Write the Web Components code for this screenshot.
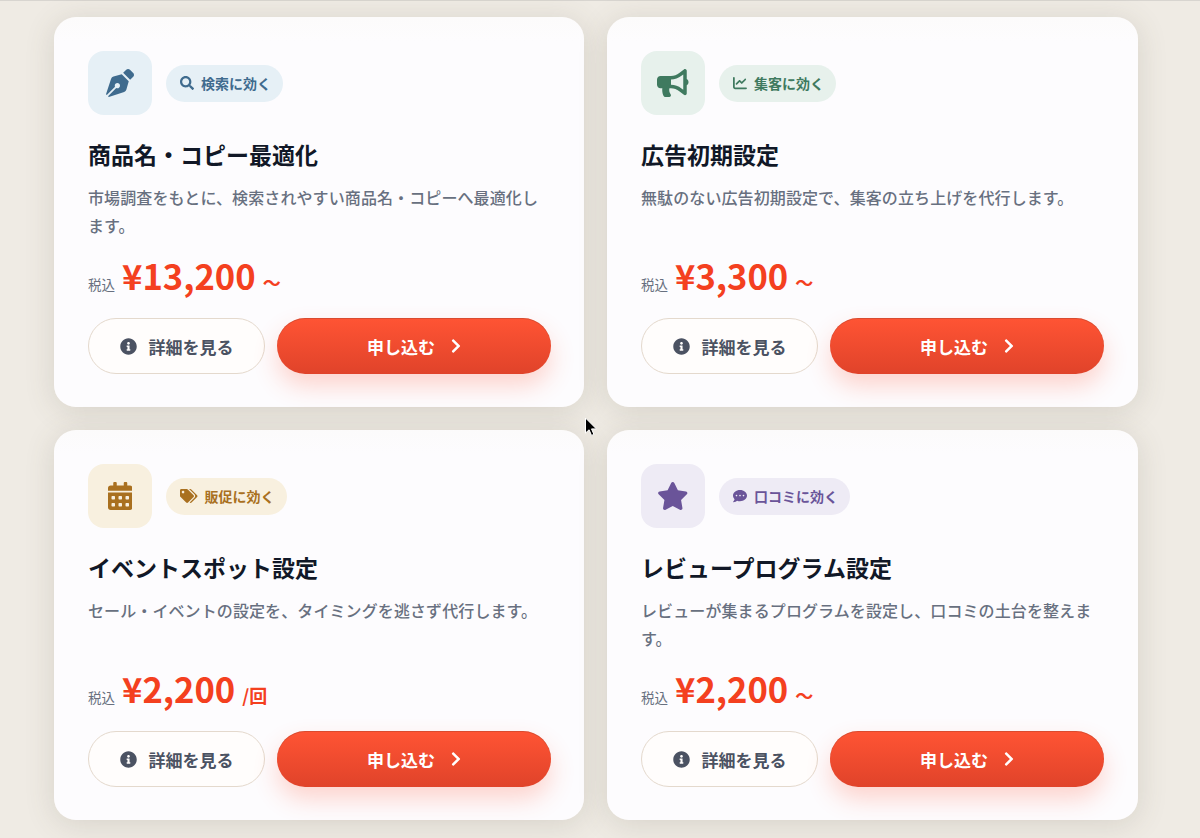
<!DOCTYPE html>
<html lang="ja">
<head>
<meta charset="utf-8">
<title>services</title>
<style>
  html, body { margin: 0; height: 838px; overflow: hidden; }
  body {
    background: linear-gradient(#d8d5d0 1px, transparent 1px), #efebe4;
    font-family: "Noto Sans CJK JP", "Noto Sans", sans-serif;
  }
</style>
</head>
<body>
<service-grid>
  <service-card tone="blue" tag="検索に効く" icon="pen" tagicon="search" price="¥13,200" unit="〜" heading="商品名・コピー最適化">市場調査をもとに、検索されやすい商品名・コピーへ最適化します。</service-card>
  <service-card tone="green" tag="集客に効く" icon="bullhorn" tagicon="chart" price="¥3,300" unit="〜" heading="広告初期設定">無駄のない広告初期設定で、集客の立ち上げを代行します。</service-card>
  <service-card tone="amber" tag="販促に効く" icon="calendar" tagicon="tags" price="¥2,200" unit="/回" heading="イベントスポット設定">セール・イベントの設定を、タイミングを逃さず代行します。</service-card>
  <service-card tone="purple" tag="口コミに効く" icon="star" tagicon="comment" price="¥2,200" unit="〜" heading="レビュープログラム設定">レビューが集まるプログラムを設定し、口コミの土台を整えます。</service-card>
</service-grid>
<mouse-cursor></mouse-cursor>

<script>
const ICONS = {
  search: ['0 0 512 512', 'M505 442.7L405.3 343c-4.5-4.5-10.6-7-17-7H372c27.6-35.3 44-79.7 44-128C416 93.1 322.9 0 208 0S0 93.1 0 208s93.1 208 208 208c48.3 0 92.7-16.4 128-44v16.3c0 6.4 2.5 12.5 7 17l99.7 99.7c9.4 9.4 24.6 9.4 33.9 0l28.3-28.3c9.4-9.4 9.4-24.6.1-34zM208 336c-70.7 0-128-57.2-128-128 0-70.7 57.2-128 128-128 70.7 0 128 57.2 128 128 0 70.7-57.2 128-128 128z'],
  info: ['0 0 512 512', 'M256 8C119.043 8 8 119.083 8 256c0 136.997 111.043 248 248 248s248-111.003 248-248C504 119.083 392.957 8 256 8zm0 110c23.196 0 42 18.804 42 42s-18.804 42-42 42-42-18.804-42-42 18.804-42 42-42zm56 254c0 6.627-5.373 12-12 12h-88c-6.627 0-12-5.373-12-12v-24c0-6.627 5.373-12 12-12h12v-64h-12c-6.627 0-12-5.373-12-12v-24c0-6.627 5.373-12 12-12h64c6.627 0 12 5.373 12 12v100h12c6.627 0 12 5.373 12 12v24z'],
  chevron: ['0 0 320 512', 'M285.476 272.971L91.132 467.314c-9.373 9.373-24.569 9.373-33.941 0l-22.667-22.667c-9.357-9.357-9.375-24.522-.04-33.901L188.505 256 34.484 101.255c-9.335-9.379-9.317-24.544.04-33.901l22.667-22.667c9.373-9.373 24.569-9.373 33.941 0L285.475 239.03c9.373 9.372 9.373 24.568.001 33.941z'],
  star: ['0 0 576 512', 'M259.3 17.8L194 150.2 47.9 171.5c-26.2 3.8-36.7 36.1-17.7 54.6l105.7 103-25 145.5c-4.5 26.3 23.2 46 46.4 33.7L288 439.6l130.7 68.7c23.2 12.2 50.9-7.4 46.4-33.7l-25-145.5 105.7-103c19-18.5 8.5-50.8-17.7-54.6L382 150.2 316.7 17.8c-11.7-23.6-45.6-23.9-57.4 0z'],
  calendar: ['0 0 448 512', 'M0 464c0 26.5 21.5 48 48 48h352c26.5 0 48-21.5 48-48V192H0v272zm320-196c0-6.6 5.4-12 12-12h40c6.6 0 12 5.4 12 12v40c0 6.6-5.4 12-12 12h-40c-6.6 0-12-5.4-12-12v-40zm0 128c0-6.6 5.4-12 12-12h40c6.6 0 12 5.4 12 12v40c0 6.6-5.4 12-12 12h-40c-6.6 0-12-5.4-12-12v-40zM192 268c0-6.6 5.4-12 12-12h40c6.6 0 12 5.4 12 12v40c0 6.6-5.4 12-12 12h-40c-6.6 0-12-5.4-12-12v-40zm0 128c0-6.6 5.4-12 12-12h40c6.6 0 12 5.4 12 12v40c0 6.6-5.4 12-12 12h-40c-6.6 0-12-5.4-12-12v-40zM64 268c0-6.6 5.4-12 12-12h40c6.6 0 12 5.4 12 12v40c0 6.6-5.4 12-12 12H76c-6.6 0-12-5.4-12-12v-40zm0 128c0-6.6 5.4-12 12-12h40c6.6 0 12 5.4 12 12v40c0 6.6-5.4 12-12 12H76c-6.6 0-12-5.4-12-12v-40zM400 64h-48V16c0-8.8-7.2-16-16-16h-32c-8.8 0-16 7.2-16 16v48H160V16c0-8.8-7.2-16-16-16h-32c-8.8 0-16 7.2-16 16v48H48C21.5 64 0 85.5 0 112v48h448v-48c0-26.5-21.5-48-48-48z'],
  pen: ['0 0 512 512', 'M136.6 138.79a64.003 64.003 0 0 0-43.31 41.35L0 460l14.69 14.69L164.8 324.58c-2.99-6.26-4.8-13.18-4.8-20.58 0-26.51 21.49-48 48-48s48 21.49 48 48-21.49 48-48 48c-7.4 0-14.32-1.81-20.58-4.8L37.31 497.31 52 512l279.86-93.29a64.003 64.003 0 0 0 41.35-43.31L416 224 288 96l-151.4 42.79zm361.34-64.62l-60.11-60.11c-18.75-18.75-49.16-18.75-67.91 0l-56.55 56.55 128.02 128.02 56.55-56.55c18.75-18.75 18.75-49.15 0-67.91z'],
  bullhorn: ['0 0 576 512', 'M576 240c0-23.63-12.95-44.04-32-55.12V32.01C544 23.26 537.02 0 512 0c-7.12 0-14.19 2.38-19.98 7.02l-85.03 68.03C364.28 109.19 310.66 128 256 128H64c-35.35 0-64 28.65-64 64v96c0 35.35 28.65 64 64 64h33.7c-1.39 10.48-2.18 21.14-2.18 32 0 39.77 9.26 77.35 25.56 110.94 5.19 10.69 16.52 17.06 28.4 17.06h74.28c26.05 0 41.69-29.84 25.9-50.56-16.4-21.52-26.15-48.36-26.15-77.44 0-11.11 1.62-21.79 4.41-32H256c54.66 0 108.28 18.81 150.98 52.95l85.03 68.03a32.023 32.023 0 0 0 19.98 7.02c24.92 0 32-22.72 32-32V295.13C563.05 284.04 576 263.63 576 240zm-96 141.42l-33.05-26.44C392.95 311.78 325.12 288 256 288v-96c69.12 0 136.95-23.78 190.95-66.98L480 98.58v282.84z'],
  chart: ['0 0 512 512', 'M64 64c0-17.7-14.3-32-32-32S0 46.3 0 64V400c0 44.2 35.8 80 80 80H480c17.7 0 32-14.3 32-32s-14.3-32-32-32H80c-8.8 0-16-7.2-16-16V64zm406.6 86.6c12.5-12.5 12.5-32.8 0-45.3s-32.8-12.5-45.3 0L320 210.7l-57.4-57.4c-12.5-12.5-32.8-12.5-45.3 0l-112 112c-12.5 12.5-12.5 32.8 0 45.3s32.8 12.5 45.3 0L240 221.3l57.4 57.4c12.5 12.5 32.8 12.5 45.3 0l128-128z'],
  tags: ['0 0 640 512', 'M497.941 225.941L286.059 14.059A48 48 0 0 0 252.118 0H48C21.49 0 0 21.49 0 48v204.118a48 48 0 0 0 14.059 33.941l211.882 211.882c18.744 18.745 49.136 18.746 67.882 0l204.118-204.118c18.745-18.745 18.745-49.137 0-67.882zM112 160c-26.51 0-48-21.49-48-48s21.49-48 48-48 48 21.49 48 48-21.49 48-48 48zm513.941 133.823L421.823 497.941c-18.745 18.745-49.137 18.745-67.882 0l-.36-.36L527.64 323.522c16.999-16.999 26.36-39.6 26.36-63.64s-9.362-46.641-26.36-63.64L331.397 0h48.721a48 48 0 0 1 33.941 14.059l211.882 211.882c18.745 18.745 18.745 49.137 0 67.882z'],
  comment: ['0 0 512 512', 'M256 32C114.6 32 0 125.1 0 240c0 49.6 21.4 95 57 130.7C44.5 421.1 2.7 466 2.2 466.5c-2.2 2.3-2.8 5.7-1.5 8.7S4.8 480 8 480c66.3 0 116-31.8 140.6-51.4 32.7 12.3 69 19.4 107.4 19.4 141.4 0 256-93.1 256-208S397.4 32 256 32zM128 272c-17.7 0-32-14.3-32-32s14.3-32 32-32 32 14.3 32 32-14.3 32-32 32zm128 0c-17.7 0-32-14.3-32-32s14.3-32 32-32 32 14.3 32 32-14.3 32-32 32zm128 0c-17.7 0-32-14.3-32-32s14.3-32 32-32 32 14.3 32 32-14.3 32-32 32z']
};

const svgIcon = (name, size) => {
  const [box, d] = ICONS[name];
  return `<svg viewBox="${box}" height="${size}" fill="currentColor" aria-hidden="true"><path d="${d}"/></svg>`;
};

const TONES = {
  blue: { bg: '#e6f0f6', fg: '#3f6b8e' },
  green: { bg: '#e7f1ec', fg: '#3f7a5f' },
  amber: { bg: '#f8f0df', fg: '#a9701f' },
  purple: { bg: '#eeebf5', fg: '#6a5499' }
};

class ServiceGrid extends HTMLElement {
  constructor() {
    super();
    const shadow = this.attachShadow({ mode: 'open' });
    shadow.innerHTML = `
      <style>
        :host {
          display: grid;
          grid-template-columns: 530px 530.5px;
          grid-auto-rows: 390px;
          column-gap: 23px;
          row-gap: 23px;
          padding: 17px 0 0 54px;
        }
      </style>
      <slot></slot>
    `;
  }
}

class ServiceCard extends HTMLElement {
  connectedCallback() {
    if (this.shadowRoot) return;
    const tone = TONES[this.getAttribute('tone')];
    const shadow = this.attachShadow({ mode: 'open' });
    shadow.innerHTML = `
      <style>
        :host {
          display: flex;
          flex-direction: column;
          box-sizing: border-box;
          padding: 34px 33px 33px 34px;
          background: linear-gradient(#fcfbfb, #fdfcfe 24px);
          border-radius: 22px;
          box-shadow: 0 4px 30px rgba(90, 80, 60, 0.16);
          --tone-bg: ${tone.bg};
          --tone-fg: ${tone.fg};
        }
        .head { display: flex; align-items: center; gap: 14px; }
        .icon {
          width: 64px;
          height: 64px;
          border-radius: 16px;
          background: var(--tone-bg);
          color: var(--tone-fg);
          display: flex;
          align-items: center;
          justify-content: center;
        }
        .tag {
          display: flex;
          align-items: center;
          gap: 7px;
          height: 37px;
          padding: 0 12px 0 14px;
          border-radius: 19px;
          background: var(--tone-bg);
          color: var(--tone-fg);
          font-size: 14px;
          font-weight: 700;
        }
        h3 {
          margin: 22px 0 0;
          font-size: 23px;
          line-height: 34px;
          font-weight: 700;
          color: #111827;
        }
        .desc {
          margin: 12px 0 0;
          height: 56px;
          font-size: 16px;
          line-height: 28px;
          font-weight: 500;
          letter-spacing: 0.1px;
          color: #687080;
        }
        .price {
          display: flex;
          align-items: baseline;
          margin-top: 11px;
          height: 50px;
          line-height: 50px;
          color: #f4401f;
          font-weight: 700;
        }
        .price small { font-size: 13.5px; font-weight: 400; color: #687080; margin-right: 7px; }
        .price b { font-size: 34.6px; font-weight: 700; }
        .price span { font-size: 18px; margin-left: 7px; }
        .actions { display: flex; gap: 12px; margin-top: auto; }
        .btn {
          display: flex;
          align-items: center;
          justify-content: center;
          box-sizing: border-box;
          height: 56px;
          border-radius: 28px;
          font-size: 17px;
          font-weight: 700;
        }
        .detail {
          width: 177px;
          gap: 12px;
          color: #4b5262;
          background: #fffdfc;
          border: 1px solid #e4d9cd;
        }
        .apply {
          width: 274px;
          gap: 16px;
          color: #fff;
          background: linear-gradient(180deg, #ff5434, #e0432a);
          box-shadow: inset 0 1px 0 rgba(150, 60, 40, 0.35), 0 12px 24px rgba(255, 84, 52, 0.24);
        }
      </style>
      <div class="head">
        <div class="icon">${svgIcon(this.getAttribute('icon'), 28)}</div>
        <div class="tag">${svgIcon(this.getAttribute('tagicon'), 14)}<span>${this.getAttribute('tag')}</span></div>
      </div>
      <h3>${this.getAttribute('heading')}</h3>
      <p class="desc"><slot></slot></p>
      <div class="price"><small>税込</small><b>${this.getAttribute('price')}</b><span>${this.getAttribute('unit')}</span></div>
      <div class="actions">
        <div class="btn detail">${svgIcon('info', 17)}<span>詳細を見る</span></div>
        <div class="btn apply"><span>申し込む</span>${svgIcon('chevron', 16)}</div>
      </div>
    `;
  }
}

class MouseCursor extends HTMLElement {
  constructor() {
    super();
    const shadow = this.attachShadow({ mode: 'open' });
    shadow.innerHTML = `
      <style>
        :host { position: absolute; left: 584px; top: 417px; width: 14px; height: 22px; }
      </style>
      <svg width="14" height="22" viewBox="0 0 14 22">
        <path d="M1.5 1v15l3.6-3.2 2.4 5.6 2.4-1-2.4-5.5h4.9z" fill="#000" stroke="#fff" stroke-width="1"/>
      </svg>
    `;
  }
}

customElements.define('service-grid', ServiceGrid);
customElements.define('service-card', ServiceCard);
customElements.define('mouse-cursor', MouseCursor);
</script>
</body>
</html>
